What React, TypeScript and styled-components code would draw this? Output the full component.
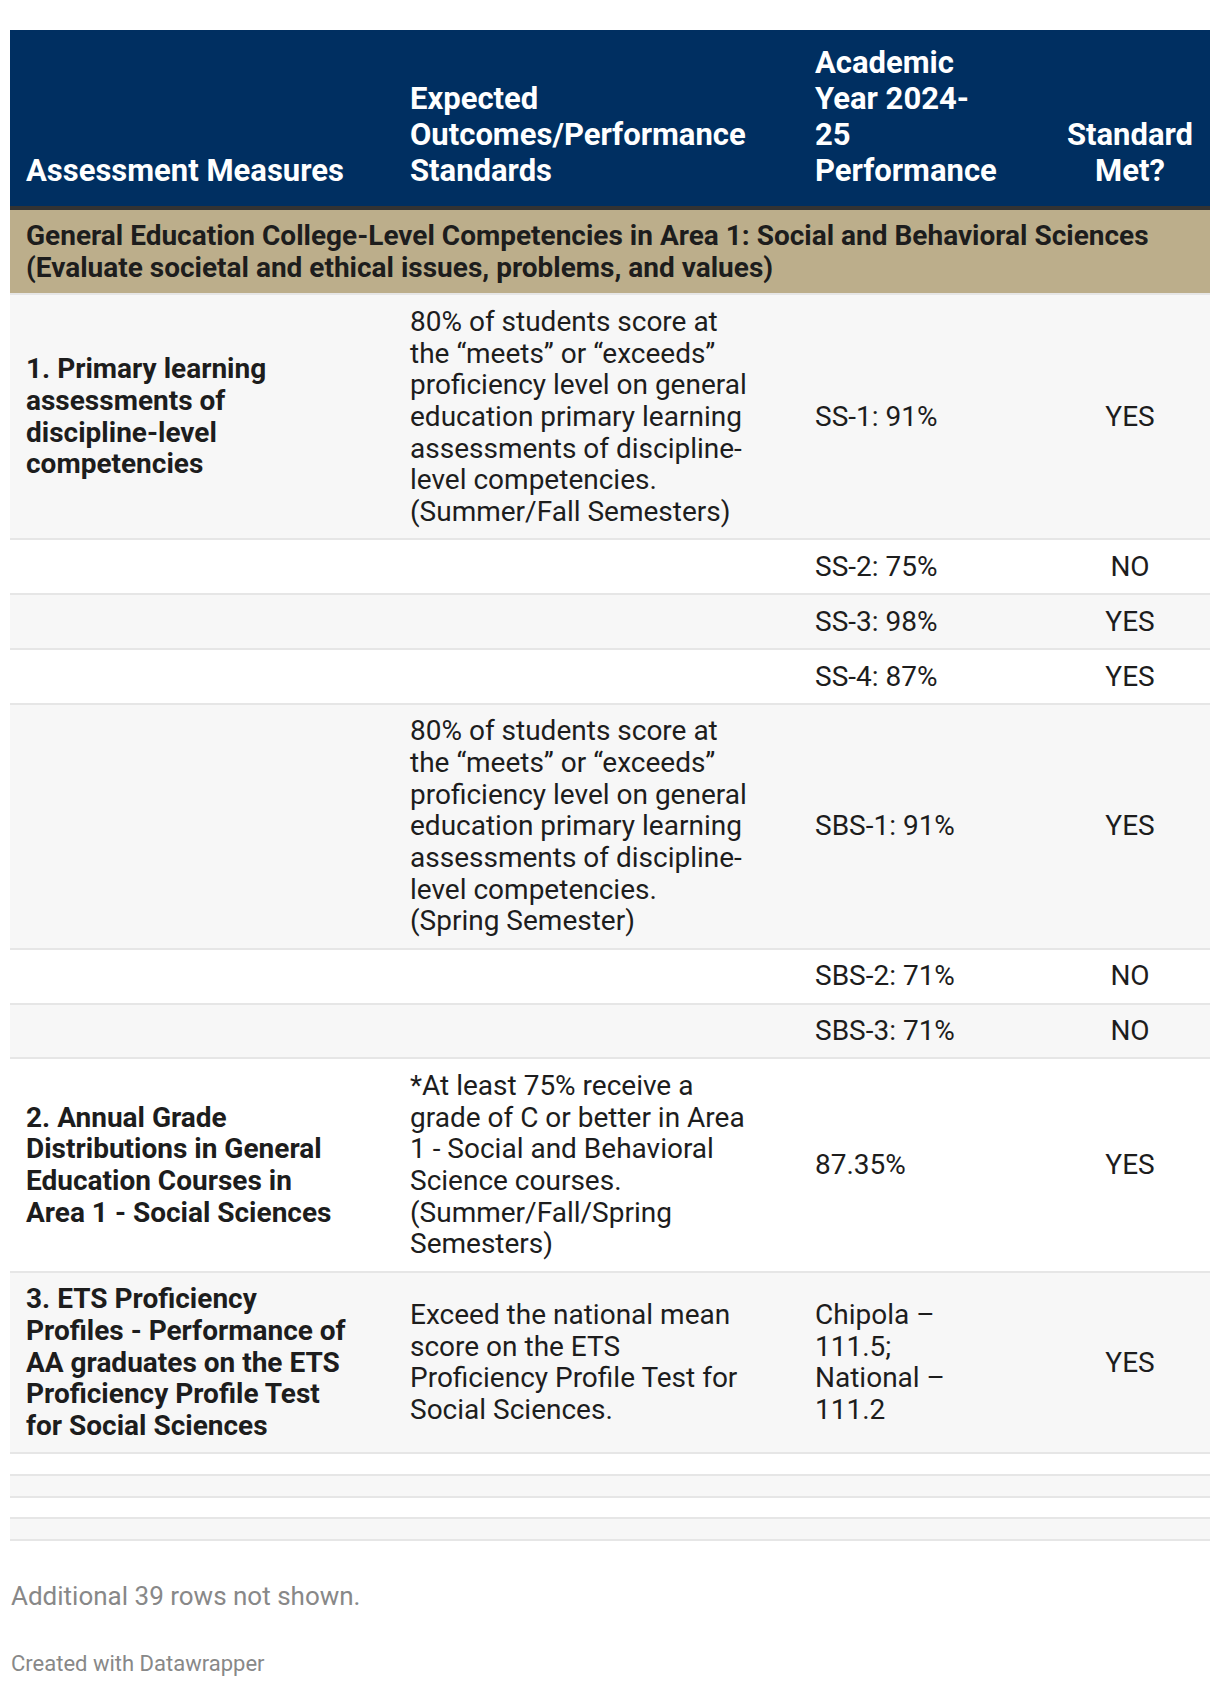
import React from "react";
import styled, { createGlobalStyle } from "styled-components";

const GlobalStyle = createGlobalStyle`
  html, body {
    margin: 0;
    padding: 0;
    background: #ffffff;
  }
  body {
    font-family: Roboto, "Liberation Sans", Arial, sans-serif;
    color: #1d1d1d;
    -webkit-font-smoothing: antialiased;
  }
`;

const Page = styled.div`
  padding: 30px 10px 0 10px;
  width: 1200px;
`;

const Table = styled.div`
  display: flex;
  flex-direction: column;
  width: 1200px;
`;

const COLS = "384px 405px 251px 160px";

const HeaderRow = styled.div`
  display: grid;
  grid-template-columns: ${COLS};
  align-items: end;
  background: #002f61;
  border-bottom: 4px solid #333333;
`;

const HeaderCell = styled.div<{ $pr: number; $center?: boolean }>`
  padding: 15px ${(p) => p.$pr}px 17px ${(p) => (p.$center ? 0 : 16)}px;
  font-size: 31px;
  line-height: 36px;
  font-weight: 700;
  color: #ffffff;
  text-align: ${(p) => (p.$center ? "center" : "left")};
`;

const GroupRow = styled.div`
  background: #bcae8b;
  padding: 10px 16px;
  font-size: 28px;
  line-height: 31.67px;
  font-weight: 700;
  color: #1d1d1d;
  border-bottom: 2px solid #e6e6e6;
`;

const Row = styled.div<{ $odd: boolean }>`
  display: grid;
  grid-template-columns: ${COLS};
  align-items: center;
  background: ${(p) => (p.$odd ? "#f7f7f7" : "#ffffff")};
  border-bottom: 2px solid #e6e6e6;
`;

const Cell = styled.div<{ $pr: number; $bold?: boolean; $center?: boolean }>`
  padding: 10.6px ${(p) => p.$pr}px 10.6px ${(p) => (p.$center ? 0 : 16)}px;
  font-size: 28px;
  line-height: 31.67px;
  font-weight: ${(p) => (p.$bold ? 700 : 400)};
  color: #1d1d1d;
  text-align: ${(p) => (p.$center ? "center" : "left")};
  min-height: 31.67px;
`;

const EmptyRow = styled.div<{ $odd: boolean }>`
  height: 19.75px;
  background: ${(p) => (p.$odd ? "#f7f7f7" : "#ffffff")};
  border-bottom: 2px solid #e6e6e6;
`;

const Notes = styled.div`
  margin-top: 39.5px;
  padding-left: 1px;
  font-size: 26px;
  line-height: 31.2px;
  color: #888888;
`;

const Credit = styled.div`
  margin-top: 39.6px;
  padding-left: 1px;
  font-size: 22px;
  line-height: 26.4px;
  color: #888888;
`;

const PR = [44, 47, 51, 0];

type RowData = {
  measure?: string;
  outcome?: string;
  perf: React.ReactNode;
  met: string;
};

const rows: RowData[] = [
  {
    measure: "1. Primary learning assessments of discipline-level competencies",
    outcome:
      "80% of students score at the \u201cmeets\u201d or \u201cexceeds\u201d proficiency level on general education primary learning assessments of discipline-level competencies. (Summer/Fall Semesters)",
    perf: "SS-1: 91%",
    met: "YES",
  },
  { perf: "SS-2: 75%", met: "NO" },
  { perf: "SS-3: 98%", met: "YES" },
  { perf: "SS-4: 87%", met: "YES" },
  {
    outcome:
      "80% of students score at the \u201cmeets\u201d or \u201cexceeds\u201d proficiency level on general education primary learning assessments of discipline-level competencies. (Spring Semester)",
    perf: "SBS-1: 91%",
    met: "YES",
  },
  { perf: "SBS-2: 71%", met: "NO" },
  { perf: "SBS-3: 71%", met: "NO" },
  {
    measure: "2. Annual Grade Distributions in General Education Courses in Area 1 - Social Sciences",
    outcome:
      "*At least 75% receive a grade of C or better in Area 1 - Social and Behavioral Science courses. (Summer/Fall/Spring Semesters)",
    perf: "87.35%",
    met: "YES",
  },
  {
    measure:
      "3. ETS Proficiency Profiles - Performance of AA graduates on the ETS Proficiency Profile Test for Social Sciences",
    outcome: "Exceed the national mean score on the ETS Proficiency Profile Test for Social Sciences.",
    perf: "Chipola \u2013 111.5; National \u2013 111.2",
    met: "YES",
  },
];

export default function App() {
  return (
    <>
      <GlobalStyle />
      <Page>
        <Table>
          <HeaderRow>
            <HeaderCell $pr={PR[0]}>Assessment Measures</HeaderCell>
            <HeaderCell $pr={PR[1]}>Expected Outcomes/Performance Standards</HeaderCell>
            <HeaderCell $pr={PR[2]}>Academic Year 2024-25 Performance</HeaderCell>
            <HeaderCell $pr={0} $center>
              Standard Met?
            </HeaderCell>
          </HeaderRow>
          <GroupRow>
            General Education College-Level Competencies in Area 1: Social and Behavioral Sciences
            (Evaluate societal and ethical issues, problems, and values)
          </GroupRow>
          {rows.map((r, i) => (
            <Row key={i} $odd={i % 2 === 0}>
              <Cell $pr={PR[0]} $bold>
                {r.measure ?? ""}
              </Cell>
              <Cell $pr={PR[1]}>{r.outcome ?? ""}</Cell>
              <Cell $pr={PR[2]}>{r.perf}</Cell>
              <Cell $pr={0} $center>
                {r.met}
              </Cell>
            </Row>
          ))}
          {[0, 1, 2, 3].map((k) => (
            <EmptyRow key={k} $odd={k % 2 === 1} />
          ))}
        </Table>
        <Notes>Additional 39 rows not shown.</Notes>
        <Credit>Created with Datawrapper</Credit>
      </Page>
    </>
  );
}
